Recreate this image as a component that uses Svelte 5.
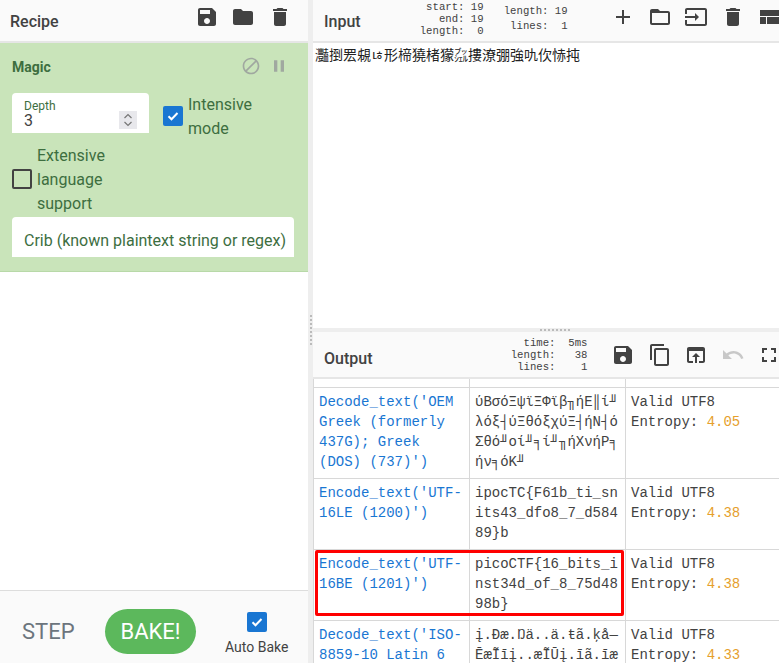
<script lang="ts">
  const icons: Record<string, string> = {
    save: 'M17 3H5c-1.11 0-2 .9-2 2v14c0 1.1.89 2 2 2h14c1.1 0 2-.9 2-2V7l-4-4zm-5 16c-1.66 0-3-1.34-3-3s1.34-3 3-3 3 1.34 3 3-1.34 3-3 3zm3-10H5V5h10v4z',
    folder: 'M10 4H4c-1.1 0-1.99.9-1.99 2L2 18c0 1.1.9 2 2 2h16c1.1 0 2-.9 2-2V8c0-1.1-.9-2-2-2h-8l-2-2z',
    trash: 'M6 19c0 1.1.9 2 2 2h8c1.1 0 2-.9 2-2V7H6v12zM19 4h-3.5l-1-1h-5l-1 1H5v2h14V4z',
    block: 'M12 2C6.48 2 2 6.48 2 12s4.48 10 10 10 10-4.48 10-10S17.52 2 12 2zM4 12c0-4.42 3.58-8 8-8 1.85 0 3.55.63 4.9 1.69L5.69 16.9C4.63 15.55 4 13.85 4 12zm8 8c-1.85 0-3.55-.63-4.9-1.69L18.31 7.1C19.37 8.45 20 10.15 20 12c0 4.42-3.58 8-8 8z',
    pause: 'M6 19h4V5H6v14zm8-14v14h4V5h-4z',
    add: 'M19 13h-6v6h-2v-6H5v-2h6V5h2v6h6v2z',
    folderOpen: 'M20 6h-8l-2-2H4c-1.1 0-1.99.9-1.99 2L2 18c0 1.1.9 2 2 2h16c1.1 0 2-.9 2-2V8c0-1.1-.9-2-2-2zm0 12H4V8h16v10z',
    input: 'M21 3.01H3c-1.1 0-2 .9-2 2V9h2V4.99h18v14.03H3V15H1v4.01c0 1.1.9 1.98 2 1.98h18c1.1 0 2-.88 2-1.98v-14c0-1.11-.9-2-2-2zM11 16l4-4-4-4v3H1v2h10v3z',
    compact: 'M3 19h6v-7H3v7zm7 0h12v-7H10v7zM3 5v6h19V5H3z',
    copy: 'M16 1H4c-1.1 0-2 .9-2 2v14h2V3h12V1zm3 4H8c-1.1 0-2 .9-2 2v14c0 1.1.9 2 2 2h11c1.1 0 2-.9 2-2V7c0-1.1-.9-2-2-2zm0 16H8V7h11v14z',
    openIn: 'M19 4H5c-1.11 0-2 .9-2 2v12c0 1.1.89 2 2 2h4v-2H5V8h14v10h-4v2h4c1.1 0 2-.9 2-2V6c0-1.1-.9-2-2-2zm-7 6l-4 4h3v6h2v-6h3l-4-4z',
    undo: 'M12.5 8c-2.65 0-5.05.99-6.9 2.6L2 7v9h9l-3.62-3.62c1.39-1.16 3.16-1.88 5.12-1.88 3.54 0 6.55 2.31 7.6 5.5l2.37-.78C21.08 11.03 17.15 8 12.5 8z',
    fullscreen: 'M7 14H5v5h5v-2H7v-3zm-2-4h2V7h3V5H5v5zm12 7h-3v2h5v-5h-2v3zM14 5v2h3v3h2V5h-5z'
  };

  const recipeButtons = ['save', 'folder', 'trash'];
  const inputButtons = ['add', 'folderOpen', 'input', 'trash', 'compact'];
  const outputButtons = ['save', 'copy', 'openIn', 'undo', 'fullscreen'];

  const rows = [
    {
      recipe: "Decode_text('OEM Greek (formerly 437G); Greek (DOS) (737)')",
      result: 'ύΒσόΞψϊΞΦϊβ╖ήΕ║ί╜\nλόξ┤ύΞθόξχύΞ┤ήΝ┤ό\nΣθό╜οί╜╕ί╜╖ήΧνήΡ╕\nήν╕όΚ╜',
      entropy: '4.05'
    },
    {
      recipe: "Encode_text('UTF-16LE (1200)')",
      result: 'ipocTC{F61b_ti_sn\nits43_dfo8_7_d584\n89}b',
      entropy: '4.38'
    },
    {
      recipe: "Encode_text('UTF-16BE (1201)')",
      result: 'picoCTF{16_bits_i\nnst34d_of_8_75d48\n98b}',
      entropy: '4.38'
    },
    {
      recipe: "Decode_text('ISO-8859-10 Latin 6 (Nordic) (28600)')",
      result: 'į.Ðæ.Ŋä..ä.ŧã.ķå—\nĒæĨīį..æĨŪį.īã.īæ\n.ŸæŊĶåžļåž·ã.Īã.¸',
      entropy: '4.33'
    }
  ];
</script>

{#snippet icon(name: string, size = 24)}
  <svg width={size} height={size} viewBox="0 0 24 24" fill="currentColor"><path d={icons[name]} /></svg>
{/snippet}

{#snippet tick()}
  <svg width="20" height="20" viewBox="0 0 20 20" fill="none"><path d="M5.5 10.2l3 3 6-6.2" stroke="#fff" stroke-width="2" /></svg>
{/snippet}

<div class="app">
  <section class="recipe">
    <header class="title-bar recipe-bar">
      <h2>Recipe</h2>
      <div class="buttons">
        {#each recipeButtons as b}
          <span class="btn">{@render icon(b)}</span>
        {/each}
      </div>
    </header>

    <div class="operation">
      <div class="op-head">
        <span class="op-name">Magic</span>
        <span class="op-icons">
          {@render icon('block', 20)}
          {@render icon('pause', 20)}
        </span>
      </div>

      <div class="op-args">
        <div class="field depth">
          <span class="field-label">Depth</span>
          <span class="field-value">3</span>
          <span class="spinner">
            <svg width="12" height="16" viewBox="0 0 12 16" fill="none" stroke="#777" stroke-width="1.2"><path d="M2.5 6l3.5-3.5L9.500 6M2.500 10l3.500 3.500L9.500 10" /></svg>
          </span>
        </div>
        <div class="check intensive">
          <span class="box on">{@render tick()}</span>
          <span class="check-label">Intensive<br />mode</span>
        </div>
        <div class="check extensive">
          <span class="box"></span>
          <span class="check-label">Extensive<br />language<br />support</span>
        </div>
        <div class="field crib">Crib (known plaintext string or regex)</div>
      </div>
    </div>

    <div class="recipe-empty"></div>

    <footer class="controls">
      <span class="step">STEP</span>
      <span class="bake">BAKE!</span>
      <div class="auto-bake">
        <span class="box on">{@render tick()}</span>
        <span>Auto Bake</span>
      </div>
    </footer>
  </section>

  <div class="gutter"><span class="grip-v"></span></div>

  <section class="io">
    <header class="title-bar input-bar">
      <h2>Input</h2>
      <div class="info info-sel">start: 19<br />end: 19<br />length:  0</div>
      <div class="info info-len">length: 19<br />lines:  1</div>
      <div class="buttons">
        {#each inputButtons as b}
          <span class="btn">{@render icon(b)}</span>
        {/each}
      </div>
    </header>

    <div class="input-text">灩捯䍔䙻ㄶ形楴獟楮獴㌴摟潦弸強㕤㐸㤸扽</div>

    <div class="divider"><span class="grip-h"></span></div>

    <header class="title-bar output-bar">
      <h2>Output</h2>
      <div class="info info-out">time:  5ms<br />length:   38<br />lines:    1</div>
      <div class="buttons">
        {#each outputButtons as b}
          <span class="btn" class:disabled={b === 'undo'}>{@render icon(b)}</span>
        {/each}
      </div>
    </header>

    <div class="output">
      <table>
        <tbody>
          <tr class="cut-row"><td></td><td></td><td></td></tr>
          {#each rows as row}
            <tr>
              <td class="link">{row.recipe}</td>
              <td class="result">{row.result}</td>
              <td>Valid UTF8<br />Entropy: <span class="entropy">{row.entropy}</span></td>
            </tr>
          {/each}
        </tbody>
      </table>
      <div class="highlight"></div>
    </div>
  </section>
</div>

<style>
  :global(body) {
    margin: 0;
  }

  .app {
    display: flex;
    width: 779px;
    height: 663px;
    overflow: hidden;
    background: #fff;
    color: #424242;
    font-family: Roboto, "Liberation Sans", sans-serif;
  }

  .title-bar {
    display: flex;
    align-items: center;
    flex: none;
    box-sizing: border-box;
    background: #fafafa;
    border-bottom: 2px solid #e6e6e6;
  }

  h2 {
    margin: 0;
    font-size: 16px;
    font-weight: 500;
    color: #424242;
  }

  .buttons {
    display: flex;
    flex: none;
  }

  .btn {
    display: flex;
    justify-content: center;
    width: 36.5px;
  }

  .btn.disabled {
    color: #c8c8c8;
  }

  /* recipe column */
  .recipe {
    display: flex;
    flex-direction: column;
    flex: none;
    width: 308px;
  }

  .recipe-bar {
    height: 43px;
    padding-top: 2px;
    padding-left: 10px;
    padding-right: 10px;
    justify-content: space-between;
  }

  .recipe-bar .buttons {
    margin-top: -10px;
  }

  .operation {
    flex: none;
    box-sizing: border-box;
    height: 229px;
    padding: 0 14px 0 12px;
    background: #c9e4ba;
    border-bottom: 1px solid #b8d9a8;
    color: #3d6e3f;
  }

  .op-head {
    display: flex;
    justify-content: space-between;
    align-items: center;
    height: 48px;
  }

  .op-name {
    font-size: 14px;
    font-weight: 700;
  }

  .op-icons {
    display: flex;
    gap: 8px;
    margin-right: 5px;
    margin-top: -2px;
    color: #a0a8a0;
  }

  .op-args {
    display: flex;
    flex-wrap: wrap;
    align-items: flex-start;
    padding-top: 2px;
    font-size: 16px;
    line-height: 24px;
  }

  .field {
    box-sizing: border-box;
    height: 40px;
    background: #fff;
    border-radius: 4px 4px 0 0;
  }

  .depth {
    position: relative;
    width: 137px;
    padding: 6px 12px 0;
  }

  .field-label {
    display: block;
    font-size: 12px;
    line-height: 14px;
  }

  .field-value {
    display: block;
    color: #424242;
    font-size: 16px;
    line-height: 16px;
  }

  .spinner {
    position: absolute;
    top: 18px;
    right: 12px;
    display: flex;
    align-items: center;
    justify-content: center;
    width: 18px;
    height: 18px;
    background: #e8e8ec;
  }

  .check {
    display: flex;
    align-items: center;
    gap: 5px;
  }

  .check .box {
    margin-bottom: 2px;
  }

  .intensive {
    margin-left: 14px;
  }

  .extensive {
    width: 100%;
    margin-top: 3px;
  }

  .box {
    display: block;
    flex: none;
    box-sizing: border-box;
    width: 20px;
    height: 20px;
    border: 2px solid #424242;
    border-radius: 2px;
  }

  .box.on {
    border: none;
    background: #1976d2;
  }

  .box :global(svg) {
    display: block;
  }

  .crib {
    width: 282px;
    margin-top: 1px;
    padding: 12px 12px 0;
    white-space: nowrap;
  }

  .recipe-empty {
    flex: 1;
  }

  .controls {
    display: flex;
    align-items: center;
    flex: none;
    box-sizing: border-box;
    height: 73px;
    padding: 9px 0 0 22px;
    background: #fafafa;
    border-top: 1px solid #ddd;
  }

  .step {
    flex: none;
    width: 83px;
    color: #6c757d;
    font-size: 22px;
  }

  .bake {
    display: flex;
    align-items: center;
    justify-content: center;
    flex: none;
    width: 91px;
    height: 45px;
    border-radius: 23px;
    background: #5cb85c;
    color: #fff;
    font-size: 22px;
  }

  .auto-bake {
    display: flex;
    flex-direction: column;
    align-items: center;
    flex: none;
    gap: 5px;
    margin: 6px 0 0 29px;
    font-size: 14px;
    line-height: 20px;
  }

  /* splitters */
  .gutter {
    display: flex;
    align-items: center;
    justify-content: center;
    flex: none;
    width: 5px;
    background: #eee;
    height: 100%;
  }

  .grip-v {
    width: 0;
    height: 30px;
    margin-top: -3px;
    border-left: 2px dotted #bbb;
  }

  .divider {
    display: flex;
    align-items: center;
    justify-content: center;
    flex: none;
    height: 4px;
    background: #eee;
    padding-left: 10px;
  }

  .grip-h {
    width: 30px;
    height: 0;
    border-top: 2px dotted #bbb;
  }

  /* input and output */
  .io {
    display: flex;
    flex-direction: column;
    flex: none;
    width: 474.5px;
  }

  .input-bar {
    height: 43px;
    padding-top: 2px;
    padding-left: 11px;
  }

  .output-bar {
    height: 47px;
    padding-left: 11px;
  }

  .output-bar h2 {
    margin-top: 7px;
  }

  .info {
    flex: none;
    font-family: "Liberation Mono", monospace;
    font-size: 10.67px;
    text-align: right;
    white-space: pre;
    color: #424242;
  }

  .info-sel {
    margin-left: 59px;
    width: 64px;
    line-height: 12px;
    margin-top: -5px;
  }

  .info-len {
    margin-left: 20px;
    width: 64px;
    line-height: 15px;
    margin-top: -6px;
  }

  .input-bar .buttons {
    margin-left: 37.5px;
    margin-top: -9px;
  }

  .info-out {
    margin-left: 125px;
    width: 90px;
    line-height: 12px;
  }

  .output-bar .buttons {
    margin-left: 17.5px;
  }

  .input-text {
    flex: none;
    height: 285px;
    box-sizing: border-box;
    padding: 4px 2px 0;
    font-family: "Liberation Mono", "Noto Sans CJK TC", monospace;
    font-size: 14px;
    line-height: 19px;
    color: #222;
  }

  .output {
    position: relative;
    flex: 1;
    overflow: hidden;
  }

  table {
    table-layout: fixed;
    border-collapse: collapse;
    width: 600px;
    font-family: "Liberation Mono", monospace;
    font-size: 14px;
    line-height: 20px;
  }

  td {
    box-sizing: border-box;
    width: 156px;
    padding: 4px 5px 6px;
    border: 1px solid #d8d8d8;
    vertical-align: top;
  }

  td:last-child {
    width: 288px;
  }

  .cut-row td {
    height: 8px;
    padding: 0;
    border-top: none;
  }

  .link {
    color: #1976d2;
    overflow-wrap: anywhere;
  }

  .result {
    white-space: pre;
    overflow: hidden;
  }

  .entropy {
    color: #e6a02c;
  }

  .highlight {
    position: absolute;
    left: 2px;
    top: 171px;
    width: 308.5px;
    height: 66px;
    box-sizing: border-box;
    border: 3px solid #f00;
    border-radius: 2px;
  }
</style>
